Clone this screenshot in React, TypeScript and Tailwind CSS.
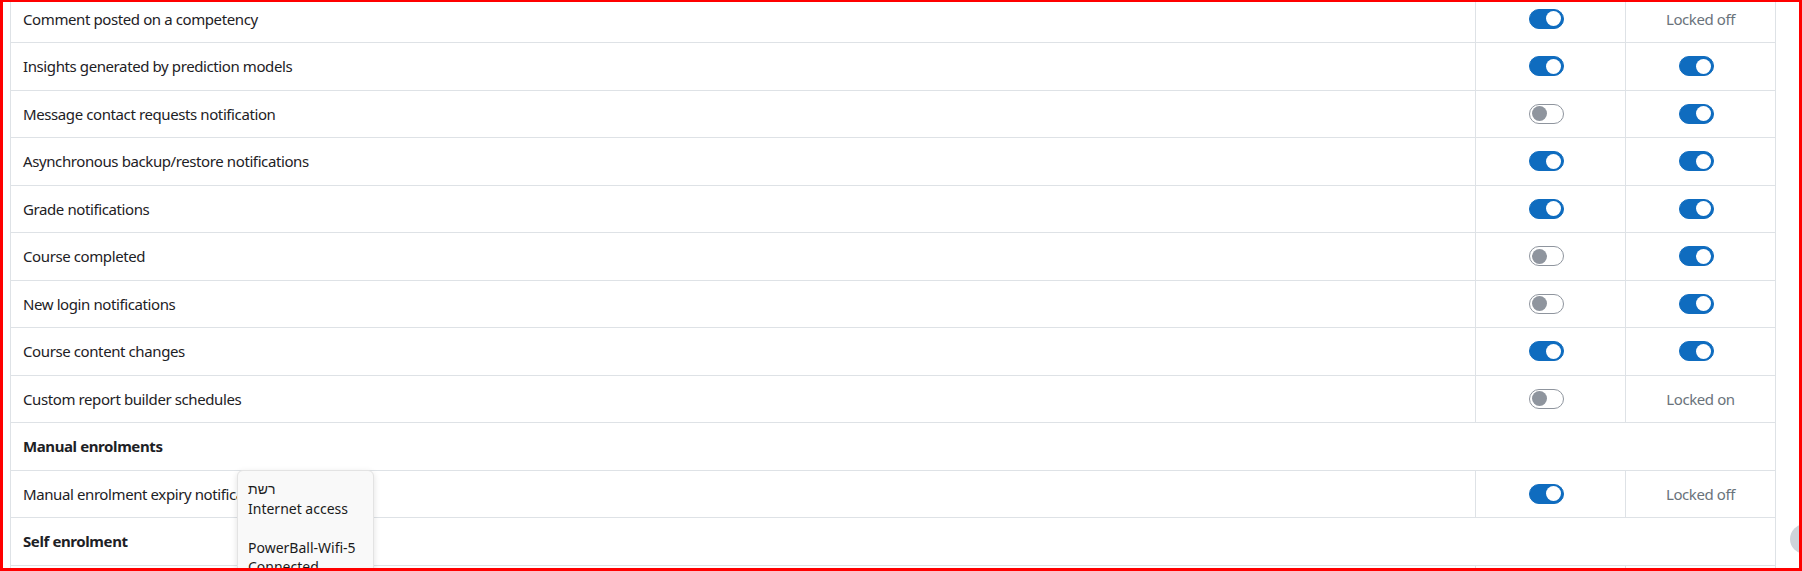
import React from "react";

type Cell = "on" | "off" | "Locked off" | "Locked on";
type Row =
  | { kind: "item"; label: string; web: Cell; email: Cell }
  | { kind: "header"; label: string };

const rows: Row[] = [
  { kind: "item", label: "Comment posted on a competency", web: "on", email: "Locked off" },
  { kind: "item", label: "Insights generated by prediction models", web: "on", email: "on" },
  { kind: "item", label: "Message contact requests notification", web: "off", email: "on" },
  { kind: "item", label: "Asynchronous backup/restore notifications", web: "on", email: "on" },
  { kind: "item", label: "Grade notifications", web: "on", email: "on" },
  { kind: "item", label: "Course completed", web: "off", email: "on" },
  { kind: "item", label: "New login notifications", web: "off", email: "on" },
  { kind: "item", label: "Course content changes", web: "on", email: "on" },
  { kind: "item", label: "Custom report builder schedules", web: "off", email: "Locked on" },
  { kind: "header", label: "Manual enrolments" },
  { kind: "item", label: "Manual enrolment expiry notification", web: "on", email: "Locked off" },
  { kind: "header", label: "Self enrolment" },
  { kind: "item", label: "Self enrolment expiry notification", web: "on", email: "Locked off" },
];

function Toggle({ on }: { on: boolean }) {
  return (
    <span
      className={
        on
          ? "mr-2 flex h-[20px] w-[35px] items-center justify-end rounded-full border border-[#0f6cbf] bg-[#0f6cbf] px-[2px]"
          : "mr-2 flex h-[20px] w-[35px] items-center justify-start rounded-full border border-[#8f959e] bg-white px-[2px]"
      }
    >
      <span
        className={
          on
            ? "block h-[15px] w-[15px] rounded-full bg-white"
            : "block h-[15px] w-[15px] rounded-full bg-[#8f959e]"
        }
      />
    </span>
  );
}

function ValueCell({ v }: { v: Cell }) {
  return (
    <div className="flex items-center justify-center border-l border-[#dee2e6] px-3 py-3">
      {v === "on" || v === "off" ? (
        <div className="flex h-[22.5px] items-center">
          <Toggle on={v === "on"} />
        </div>
      ) : (
        <span className="text-[#6a737b]">{v}</span>
      )}
    </div>
  );
}

export default function App() {
  return (
    <div
      className="relative h-[571px] w-[1802px] overflow-hidden bg-white text-[15px] leading-[22.5px] text-[#1d2125]"
      style={{ fontFamily: '"Segoe UI", "Noto Sans", sans-serif' }}
    >
      <div className="ml-[10px] mt-[-4.5px] w-[1766px] border-x border-[#dee2e6] tracking-[-0.4px]">
        {rows.map((r, i) =>
          r.kind === "header" ? (
            <div key={i} className="border-b border-[#dee2e6] px-3 py-3 font-bold">
              {r.label}
            </div>
          ) : (
            <div
              key={i}
              className="grid grid-cols-[1fr_150px_150px] border-b border-[#dee2e6]"
            >
              <div className="px-3 py-3">{r.label}</div>
              <ValueCell v={r.web} />
              <ValueCell v={r.email} />
            </div>
          )
        )}
      </div>

      {/* floating help button, partially visible */}
      <div className="absolute left-[1790px] top-[524px] h-[30px] w-[30px] rounded-full bg-[#ced4da]" />

      {/* system network tooltip */}
      <div
        className="absolute left-[237px] top-[470px] w-[137px] rounded-[6px] border border-[#e3e3e3] bg-[#f9f9f9] pl-[10px] pt-[8px] text-[14px] leading-[19.5px] text-[#1b1b1b] shadow-[0_2px_6px_rgba(0,0,0,0.12)]"
        style={{ fontFamily: '"Segoe UI", "Noto Sans", sans-serif' }}
      >
        <div dir="rtl" className="text-left">רשת</div>
        <div>Internet access</div>
        <div className="h-[19.5px]" />
        <div>PowerBall-Wifi-5</div>
        <div>Connected</div>
      </div>

      {/* red frame */}
      <div className="pointer-events-none absolute inset-0 border-b-[3px] border-l-[3px] border-r-[3px] border-t-[2px] border-[#ff0000]" />
    </div>
  );
}
